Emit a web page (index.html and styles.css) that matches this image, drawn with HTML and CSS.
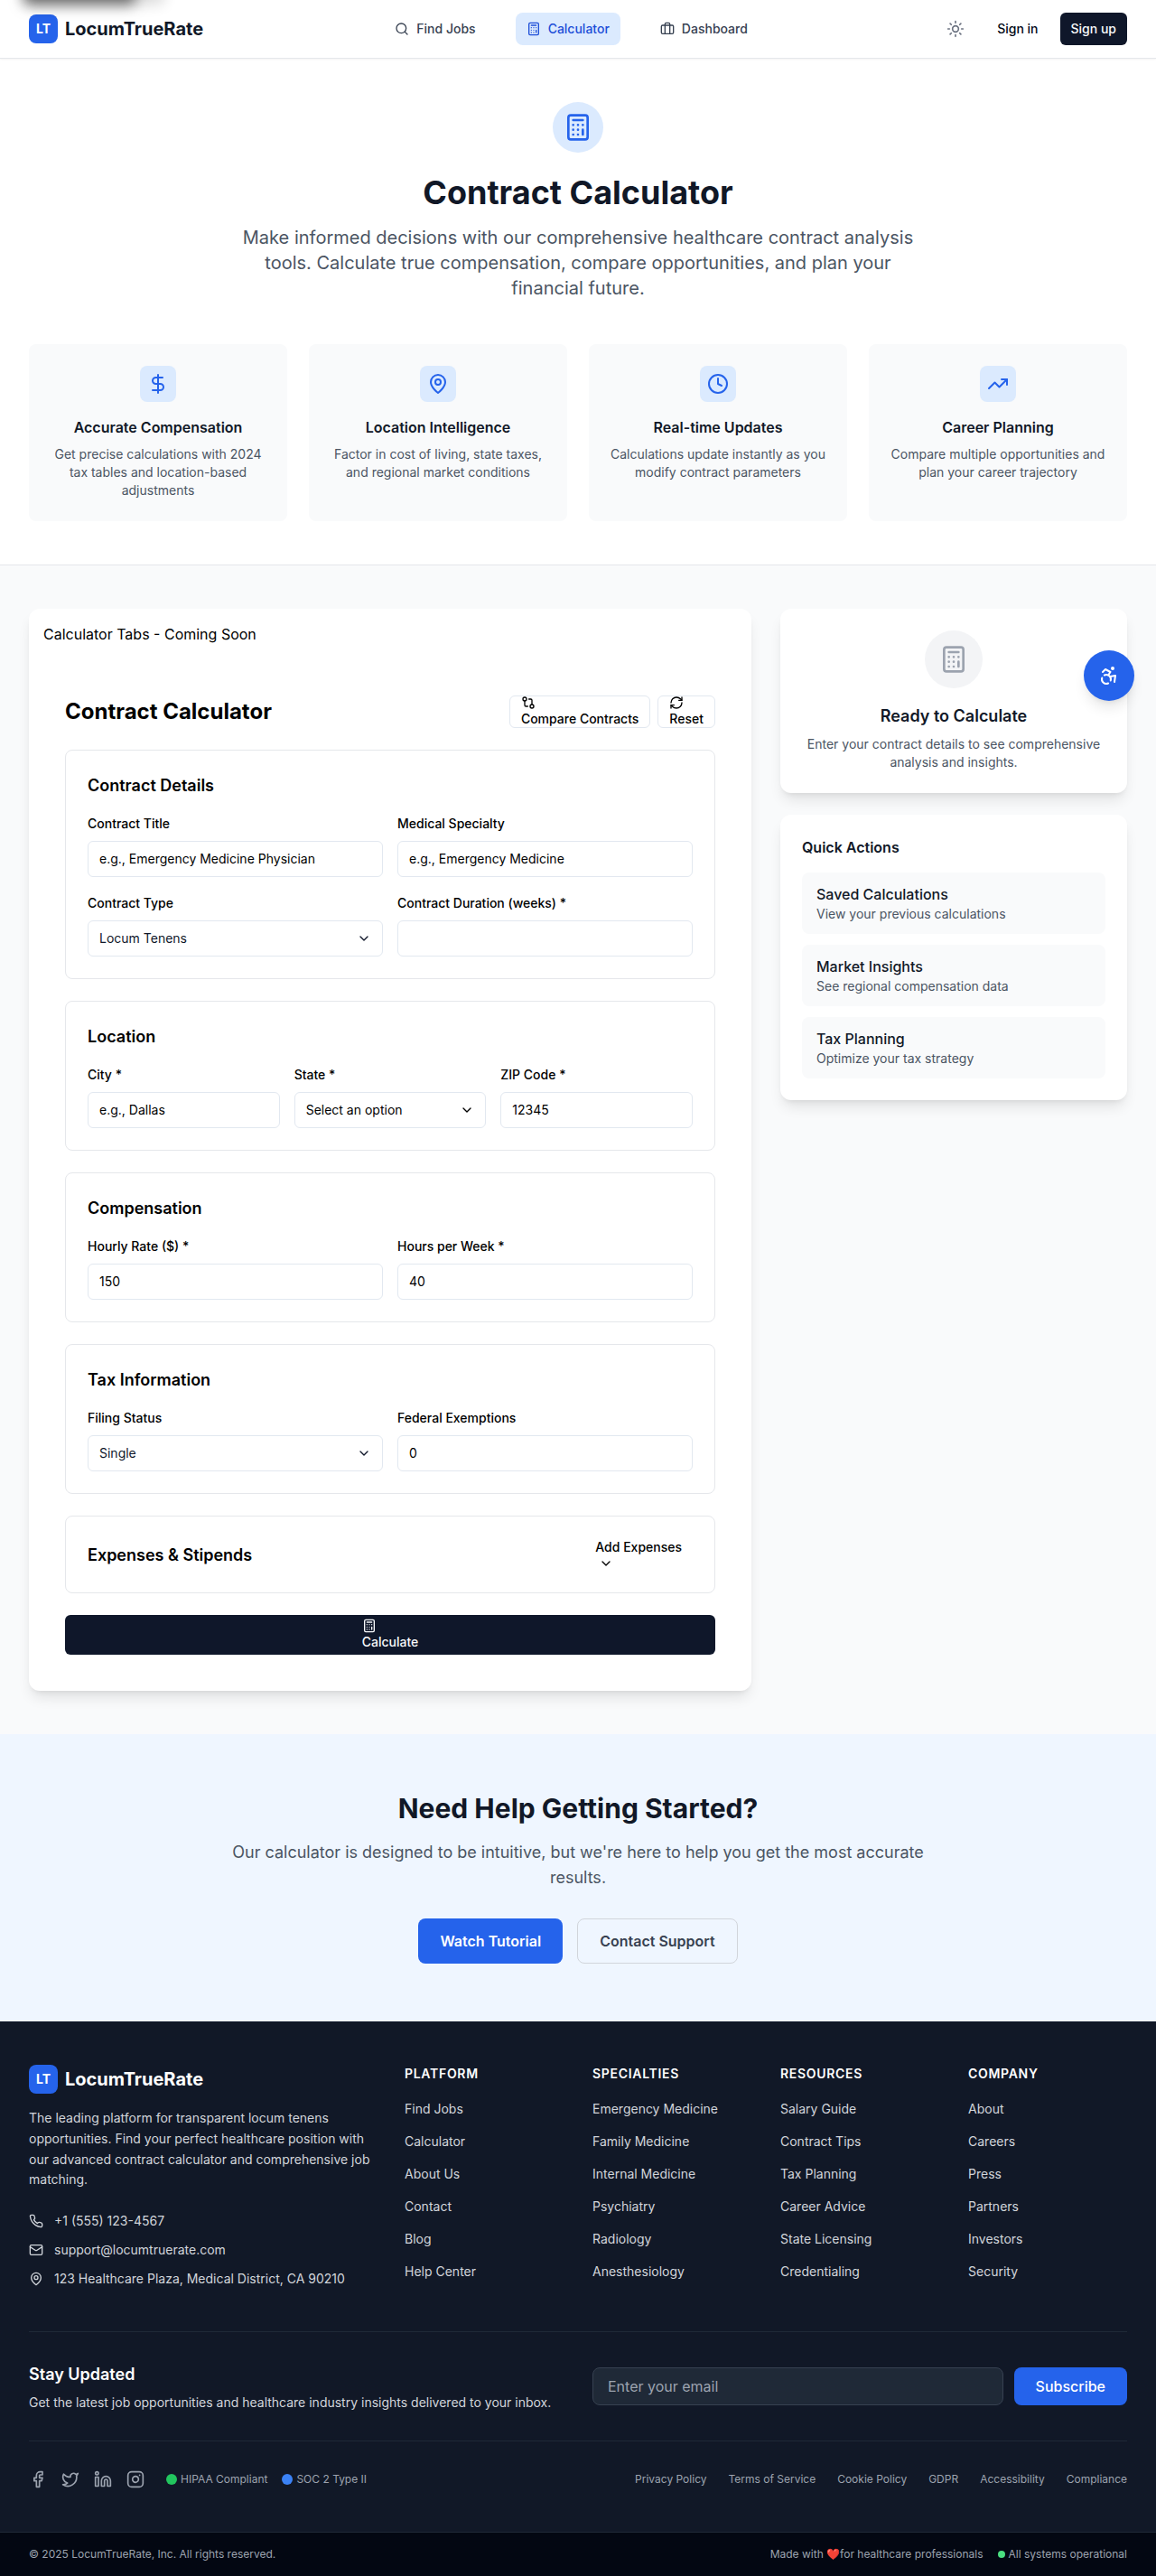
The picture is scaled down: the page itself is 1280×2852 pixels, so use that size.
FILE: index.html
```html
<!DOCTYPE html>
<html lang="en">
<head>
<meta charset="utf-8">
<title>Contract Calculator | LocumTrueRate</title>
<link rel="stylesheet" href="styles.css">
</head>
<body>
<svg class="sprite" aria-hidden="true">
  <symbol id="search" viewBox="0 0 24 24"><circle cx="11" cy="11" r="8"/><path d="m21 21-4.3-4.3"/></symbol>
  <symbol id="calc" viewBox="0 0 24 24"><rect width="16" height="20" x="4" y="2" rx="2"/><path d="M8 6h8M16 14v4M16 10h.01M12 10h.01M8 10h.01M12 14h.01M8 14h.01M12 18h.01M8 18h.01"/></symbol>
  <symbol id="briefcase" viewBox="0 0 24 24"><path d="M16 20V4a2 2 0 0 0-2-2h-4a2 2 0 0 0-2 2v16"/><rect width="20" height="14" x="2" y="6" rx="2"/></symbol>
  <symbol id="sun" viewBox="0 0 24 24"><circle cx="12" cy="12" r="4"/><path d="M12 2v2M12 20v2M4.93 4.93l1.41 1.41M17.66 17.66l1.41 1.41M2 12h2M20 12h2M6.34 17.66l-1.41 1.41M19.07 4.93l-1.41 1.41"/></symbol>
  <symbol id="dollar" viewBox="0 0 24 24"><path d="M12 2v20M17 5H9.5a3.5 3.5 0 0 0 0 7h5a3.5 3.5 0 0 1 0 7H6"/></symbol>
  <symbol id="pin" viewBox="0 0 24 24"><path d="M20 10c0 6-8 12-8 12s-8-6-8-12a8 8 0 0 1 16 0Z"/><circle cx="12" cy="10" r="3"/></symbol>
  <symbol id="clock" viewBox="0 0 24 24"><circle cx="12" cy="12" r="10"/><path d="M12 6v6l4 2"/></symbol>
  <symbol id="trend" viewBox="0 0 24 24"><path d="m22 7-8.5 8.5-5-5L2 17"/><path d="M16 7h6v6"/></symbol>
  <symbol id="compare" viewBox="0 0 24 24"><circle cx="18" cy="18" r="3"/><circle cx="6" cy="6" r="3"/><path d="M13 6h3a2 2 0 0 1 2 2v7M11 18H8a2 2 0 0 1-2-2V9"/></symbol>
  <symbol id="refresh" viewBox="0 0 24 24"><path d="M3 12a9 9 0 0 1 9-9 9.75 9.75 0 0 1 6.74 2.74L21 8"/><path d="M21 3v5h-5M21 12a9 9 0 0 1-9 9 9.75 9.75 0 0 1-6.74-2.74L3 16"/><path d="M8 16H3v5"/></symbol>
  <symbol id="chevron" viewBox="0 0 24 24"><path d="m6 9 6 6 6-6"/></symbol>
  <symbol id="access" viewBox="0 0 24 24"><circle cx="16" cy="4" r="1"/><path d="m18 19 1-7-6 1"/><path d="m5 8 3-3 5.5 3-2.36 3.5"/><path d="M4.24 14.5a5 5 0 0 0 6.88 6"/><path d="M13.76 17.5a5 5 0 0 0-6.88-6"/></symbol>
  <symbol id="phone" viewBox="0 0 24 24"><path d="M22 16.92v3a2 2 0 0 1-2.18 2 19.79 19.79 0 0 1-8.63-3.07 19.5 19.5 0 0 1-6-6 19.79 19.79 0 0 1-3.07-8.67A2 2 0 0 1 4.11 2h3a2 2 0 0 1 2 1.72 12.84 12.84 0 0 0 .7 2.81 2 2 0 0 1-.45 2.11L8.09 9.91a16 16 0 0 0 6 6l1.27-1.27a2 2 0 0 1 2.11-.45 12.84 12.84 0 0 0 2.81.7A2 2 0 0 1 22 16.92z"/></symbol>
  <symbol id="mail" viewBox="0 0 24 24"><rect width="20" height="16" x="2" y="4" rx="2"/><path d="m22 7-8.97 5.7a1.94 1.94 0 0 1-2.06 0L2 7"/></symbol>
  <symbol id="facebook" viewBox="0 0 24 24"><path d="M18 2h-3a5 5 0 0 0-5 5v3H7v4h3v8h4v-8h3l1-4h-4V7a1 1 0 0 1 1-1h3z"/></symbol>
  <symbol id="twitter" viewBox="0 0 24 24"><path d="M22 4s-.7 2.1-2 3.4c1.6 10-9.4 17.3-18 11.6 2.2.1 4.4-.6 6-2C3 15.5.5 9.6 3 5c2.2 2.6 5.6 4.1 9 4-.9-4.2 4-6.6 7-3.8 1.1 0 3-1.2 3-1.2z"/></symbol>
  <symbol id="linkedin" viewBox="0 0 24 24"><path d="M16 8a6 6 0 0 1 6 6v7h-4v-7a2 2 0 0 0-4 0v7h-4v-7a6 6 0 0 1 6-6z"/><rect width="4" height="12" x="2" y="9"/><circle cx="4" cy="4" r="2"/></symbol>
  <symbol id="instagram" viewBox="0 0 24 24"><rect width="20" height="20" x="2" y="2" rx="5"/><path d="M16 11.37A4 4 0 1 1 12.63 8 4 4 0 0 1 16 11.37zM17.5 6.5h.01"/></symbol>
</svg>

<div class="skip-shadow skip-main"></div>
<div class="skip-shadow skip-nav"></div>

<header class="header">
  <a class="logo"><span class="logo-mark">LT</span><span>LocumTrueRate</span></a>
  <nav class="nav">
    <a class="nav-link"><svg class="i16"><use href="#search"/></svg>Find Jobs</a>
    <a class="nav-link active"><svg class="i16"><use href="#calc"/></svg>Calculator</a>
    <a class="nav-link"><svg class="i16"><use href="#briefcase"/></svg>Dashboard</a>
  </nav>
  <div class="header-actions">
    <span class="theme"><svg class="i20"><use href="#sun"/></svg></span>
    <div class="auth"><a class="btn-sm">Sign in</a><a class="btn-sm dark">Sign up</a></div>
  </div>
</header>

<section class="hero">
  <div class="hero-icon"><svg class="i32"><use href="#calc"/></svg></div>
  <h1>Contract Calculator</h1>
  <p class="lead">Make informed decisions with our comprehensive healthcare contract analysis tools. Calculate true compensation, compare opportunities, and plan your financial future.</p>
  <div class="features">
    <div class="feature"><span class="feature-icon"><svg class="i24"><use href="#dollar"/></svg></span><h3>Accurate Compensation</h3><p>Get precise calculations with 2024 tax tables and location-based adjustments</p></div>
    <div class="feature"><span class="feature-icon"><svg class="i24"><use href="#pin"/></svg></span><h3>Location Intelligence</h3><p>Factor in cost of living, state taxes, and regional market conditions</p></div>
    <div class="feature"><span class="feature-icon"><svg class="i24"><use href="#clock"/></svg></span><h3>Real-time Updates</h3><p>Calculations update instantly as you modify contract parameters</p></div>
    <div class="feature"><span class="feature-icon"><svg class="i24"><use href="#trend"/></svg></span><h3>Career Planning</h3><p>Compare multiple opportunities and plan your career trajectory</p></div>
  </div>
</section>

<main class="main">
  <div class="card calculator">
    <div class="tabs">Calculator Tabs - Coming Soon</div>
    <div class="form">
      <div class="form-head">
        <h2>Contract Calculator</h2>
        <div class="form-tools">
          <button class="stack-btn outline"><svg class="i16"><use href="#compare"/></svg>Compare Contracts</button>
          <button class="stack-btn outline"><svg class="i16"><use href="#refresh"/></svg>Reset</button>
        </div>
      </div>
      <section class="panel">
        <h3>Contract Details</h3>
        <div class="grid two">
          <div><div class="label"><label>Contract Title</label></div><div class="field">e.g., Emergency Medicine Physician</div></div>
          <div><div class="label"><label>Medical Specialty</label></div><div class="field">e.g., Emergency Medicine</div></div>
          <div><div class="label"><label>Contract Type</label></div><div class="field chosen">Locum Tenens<svg class="i16"><use href="#chevron"/></svg></div></div>
          <div><div class="label"><label>Contract Duration (weeks) *</label></div><div class="field"></div></div>
        </div>
      </section>
      <section class="panel">
        <h3>Location</h3>
        <div class="grid three">
          <div><div class="label"><label>City *</label></div><div class="field">e.g., Dallas</div></div>
          <div><div class="label"><label>State *</label></div><div class="field">Select an option<svg class="i16"><use href="#chevron"/></svg></div></div>
          <div><div class="label"><label>ZIP Code *</label></div><div class="field">12345</div></div>
        </div>
      </section>
      <section class="panel">
        <h3>Compensation</h3>
        <div class="grid two">
          <div><div class="label"><label>Hourly Rate ($) *</label></div><div class="field">150</div></div>
          <div><div class="label"><label>Hours per Week *</label></div><div class="field">40</div></div>
        </div>
      </section>
      <section class="panel">
        <h3>Tax Information</h3>
        <div class="grid two">
          <div><div class="label"><label>Filing Status</label></div><div class="field chosen">Single<svg class="i16"><use href="#chevron"/></svg></div></div>
          <div><div class="label"><label>Federal Exemptions</label></div><div class="field">0</div></div>
        </div>
      </section>
      <section class="panel expenses">
        <h3>Expenses &amp; Stipends</h3>
        <button class="stack-btn">Add Expenses<svg class="i16 indent"><use href="#chevron"/></svg></button>
      </section>
      <button class="submit"><span><svg class="i16"><use href="#calc"/></svg>Calculate</span></button>
    </div>
  </div>

  <aside class="side">
    <div class="card ready">
      <div class="ready-icon"><svg class="i32"><use href="#calc"/></svg></div>
      <h3>Ready to Calculate</h3>
      <p>Enter your contract details to see comprehensive analysis and insights.</p>
    </div>
    <div class="card quick">
      <h3>Quick Actions</h3>
      <a class="action"><strong>Saved Calculations</strong><span>View your previous calculations</span></a>
      <a class="action"><strong>Market Insights</strong><span>See regional compensation data</span></a>
      <a class="action"><strong>Tax Planning</strong><span>Optimize your tax strategy</span></a>
    </div>
  </aside>
</main>

<section class="help">
  <h2>Need Help Getting Started?</h2>
  <p>Our calculator is designed to be intuitive, but we're here to help you get the most accurate results.</p>
  <div class="help-actions"><a class="cta primary">Watch Tutorial</a><a class="cta">Contact Support</a></div>
</section>

<footer class="footer">
  <div class="footer-inner">
    <div class="footer-grid">
      <div class="brand">
        <a class="logo"><span class="logo-mark">LT</span><span>LocumTrueRate</span></a>
        <p>The leading platform for transparent locum tenens opportunities. Find your perfect healthcare position with our advanced contract calculator and comprehensive job matching.</p>
        <div class="contacts">
          <div><svg class="i16"><use href="#phone"/></svg>+1 (555) 123-4567</div>
          <div><svg class="i16"><use href="#mail"/></svg>support@locumtruerate.com</div>
          <div><svg class="i16"><use href="#pin"/></svg>123 Healthcare Plaza, Medical District, CA 90210</div>
        </div>
      </div>
      <div class="links"><h4>Platform</h4><ul><li><a>Find Jobs</a></li><li><a>Calculator</a></li><li><a>About Us</a></li><li><a>Contact</a></li><li><a>Blog</a></li><li><a>Help Center</a></li></ul></div>
      <div class="links"><h4>Specialties</h4><ul><li><a>Emergency Medicine</a></li><li><a>Family Medicine</a></li><li><a>Internal Medicine</a></li><li><a>Psychiatry</a></li><li><a>Radiology</a></li><li><a>Anesthesiology</a></li></ul></div>
      <div class="links"><h4>Resources</h4><ul><li><a>Salary Guide</a></li><li><a>Contract Tips</a></li><li><a>Tax Planning</a></li><li><a>Career Advice</a></li><li><a>State Licensing</a></li><li><a>Credentialing</a></li></ul></div>
      <div class="links"><h4>Company</h4><ul><li><a>About</a></li><li><a>Careers</a></li><li><a>Press</a></li><li><a>Partners</a></li><li><a>Investors</a></li><li><a>Security</a></li></ul></div>
    </div>
    <div class="newsletter">
      <div><h3>Stay Updated</h3><p>Get the latest job opportunities and healthcare industry insights delivered to your inbox.</p></div>
      <div class="subscribe"><div class="email">Enter your email</div><a class="sub-btn">Subscribe</a></div>
    </div>
    <div class="meta">
      <div class="meta-left">
        <div class="social"><svg class="i20"><use href="#facebook"/></svg><svg class="i20"><use href="#twitter"/></svg><svg class="i20"><use href="#linkedin"/></svg><svg class="i20"><use href="#instagram"/></svg></div>
        <div class="badges"><span><i class="dot green"></i>HIPAA Compliant</span><span><i class="dot blue"></i>SOC 2 Type II</span></div>
      </div>
      <div class="legal"><a>Privacy Policy</a><a>Terms of Service</a><a>Cookie Policy</a><a>GDPR</a><a>Accessibility</a><a>Compliance</a></div>
    </div>
  </div>
  <div class="bottom">
    <span>© 2025 LocumTrueRate, Inc. All rights reserved.</span>
    <div class="bottom-right"><span class="made">Made with&nbsp;<span class="heart">❤️</span>for healthcare professionals</span><span class="status"><i class="dot small"></i>All systems operational</span></div>
  </div>
</footer>

<button class="a11y"><svg class="i24"><use href="#access"/></svg></button>
</body>
</html>
```
FILE: styles.css
```css
*, *::before, *::after { box-sizing: border-box; }
body {
  margin: 0;
  position: relative;
  font-family: Inter, "Liberation Sans", sans-serif;
  font-size: 16px;
  line-height: 24px;
  color: #020817;
  background: #fff;
  overflow-x: hidden;
}
h1, h2, h3, h4, p, ul { margin: 0; padding: 0; }
ul { list-style: none; }
button { font: inherit; border: 0; background: none; padding: 0; color: inherit; }
svg { display: block; flex: none; fill: none; stroke: currentColor; stroke-width: 2; stroke-linecap: round; stroke-linejoin: round; }
.sprite { position: absolute; width: 0; height: 0; }
.i16 { width: 16px; height: 16px; }
.i20 { width: 20px; height: 20px; }
.i24 { width: 24px; height: 24px; }
.i32 { width: 32px; height: 32px; }

/* Off-screen skip links: only their shadows reach the page */
.skip-shadow { position: absolute; z-index: 5; top: -40px; height: 40px; border-radius: 6px; }
.skip-main { left: 26px; width: 124px; box-shadow: 0 5px 15px rgba(0,0,0,.54); }
.skip-nav { left: 26px; width: 156px; box-shadow: 0 5px 15px rgba(0,0,0,.14); }

.header {
  position: relative;
  z-index: 2;
  display: flex;
  align-items: center;
  justify-content: space-between;
  height: 65px;
  padding: 0 32px;
  background: #fff;
  border-bottom: 1px solid #e5e7eb;
  box-shadow: 0 1px 2px rgba(0,0,0,.05);
}
.logo { display: flex; align-items: center; gap: 8px; font-size: 20px; line-height: 28px; font-weight: 700; color: #111827; }
.logo-mark { display: flex; align-items: center; justify-content: center; width: 32px; height: 32px; border-radius: 8px; background: #2563eb; color: #fff; font-size: 14px; line-height: 20px; }
.nav { display: flex; gap: 32px; }
.nav-link { display: flex; align-items: center; gap: 8px; padding: 8px 12px; border-radius: 8px; font-size: 14px; line-height: 20px; font-weight: 500; color: #374151; }
.nav-link.active { background: #dbeafe; color: #1d4ed8; }
.header-actions { display: flex; align-items: center; gap: 16px; }
.theme { padding: 8px; color: #6b7280; }
.auth { display: flex; gap: 12px; }
.btn-sm { padding: 8px 12px; border-radius: 6px; font-size: 14px; line-height: 20px; font-weight: 500; }
.btn-sm.dark { background: #0f172a; color: #f8fafc; }

.hero { padding: 48px 32px; border-bottom: 1px solid #e5e7eb; text-align: center; }
.hero-icon { width: 56px; height: 56px; padding: 12px; margin: 0 auto 24px; border-radius: 50%; background: #dbeafe; color: #2563eb; }
.hero h1 { font-size: 36px; line-height: 40px; font-weight: 700; color: #111827; }
.lead { max-width: 768px; margin: 16px auto 48px; font-size: 20px; line-height: 28px; color: #4b5563; }
.features { display: grid; grid-template-columns: repeat(4, 1fr); gap: 24px; }
.feature { padding: 24px; border-radius: 8px; background: #f9fafb; }
.feature-icon { display: block; width: 40px; height: 40px; padding: 8px; margin: 0 auto 16px; border-radius: 8px; background: #dbeafe; color: #2563eb; }
.feature h3 { font-size: 16px; line-height: 24px; font-weight: 600; color: #111827; margin-bottom: 8px; }
.feature p { font-size: 14px; line-height: 20px; color: #4b5563; }

.main { display: grid; grid-template-columns: repeat(3, 1fr); align-items: start; gap: 32px; padding: 48px 32px; background: #f9fafb; }
.card { border-radius: 12px; background: #fff; box-shadow: 0 10px 15px -3px rgba(0,0,0,.1), 0 4px 6px -4px rgba(0,0,0,.1); }
.calculator { grid-column: span 2; color: #000; }
.tabs { padding: 16px; }
.form { display: flex; flex-direction: column; gap: 24px; padding: 40px; }
.form-head { display: flex; align-items: center; justify-content: space-between; height: 36px; }
.form-head h2 { font-size: 24px; line-height: 32px; font-weight: 700; }
.form-tools { display: flex; gap: 8px; }
.stack-btn { display: flex; flex-direction: column; align-items: flex-start; justify-content: center; height: 36px; padding: 0 12px; border-radius: 6px; font-size: 14px; line-height: 20px; font-weight: 500; }
.stack-btn.outline { border: 1px solid #e2e8f0; }
.indent { margin-left: 4px; }
.panel { padding: 24px; border: 1px solid #e5e7eb; border-radius: 8px; }
.panel h3 { padding-top: 1px; margin-bottom: -1px; font-size: 18px; line-height: 28px; font-weight: 600; }
.grid { display: grid; gap: 16px; margin-top: 16px; }
.grid.two { grid-template-columns: repeat(2, 1fr); }
.grid.three { grid-template-columns: repeat(3, 1fr); }
.label { height: 24px; margin-bottom: 8px; }
.label label { font-size: 14px; line-height: 20px; font-weight: 500; }
.field { display: flex; align-items: center; justify-content: space-between; height: 40px; padding: 0 12px; border: 1px solid #e2e8f0; border-radius: 6px; font-size: 14px; line-height: 20px; }
.field.chosen { color: #0f172a; }
.expenses { display: flex; align-items: center; justify-content: space-between; }
.submit { display: flex; align-items: center; justify-content: center; height: 44px; border-radius: 6px; background: #0f172a; color: #f8fafc; font-size: 14px; line-height: 20px; font-weight: 500; text-align: left; }

.side { display: grid; gap: 24px; }
.side p, .action span { font-size: 14px; line-height: 20px; color: #4b5563; }
.ready { padding: 24px; text-align: center; }
.ready-icon { width: 64px; height: 64px; padding: 16px; margin: 0 auto 16px; border-radius: 50%; background: #f3f4f6; color: #9ca3af; }
.ready h3 { padding-top: 1px; margin-bottom: 7px; font-size: 18px; line-height: 28px; font-weight: 600; color: #111827; }
.quick { display: flex; flex-direction: column; gap: 12px; padding: 24px; }
.quick h3 { margin-bottom: 4px; font-size: 16px; line-height: 24px; font-weight: 600; color: #111827; }
.action { display: flex; flex-direction: column; padding: 12px 16px; border-radius: 8px; background: #f9fafb; }
.action strong { font-weight: 500; color: #111827; }

.help { padding: 64px 32px; background: #eff6ff; text-align: center; }
.help h2 { font-size: 30px; line-height: 36px; font-weight: 700; color: #111827; }
.help p { max-width: 768px; margin: 17px auto 31px; font-size: 18px; line-height: 28px; color: #4b5563; }
.help-actions { display: flex; justify-content: center; gap: 16px; }
.cta { padding: 12px 24px; border: 1px solid #d1d5db; border-radius: 8px; font-weight: 600; color: #374151; }
.cta.primary { padding: 13px 24px; border: 0; background: #2563eb; color: #fff; }

.footer { background: #111827; color: #d1d5db; font-size: 14px; line-height: 20px; }
.footer-inner { padding: 48px 32px; }
.footer-grid { display: grid; grid-template-columns: repeat(6, 1fr); gap: 32px; padding-bottom: 48px; }
.brand { grid-column: span 2; }
.footer .logo { color: #fff; }
.brand p { margin: 16px 0 24px; line-height: 22.75px; }
.contacts { display: grid; gap: 12px; }
.contacts div { display: flex; align-items: center; gap: 12px; }
.links h4 { margin-bottom: 16px; font-size: 14px; line-height: 20px; font-weight: 600; letter-spacing: .05em; text-transform: uppercase; color: #fff; }
.links ul { display: grid; gap: 12px; }
.links li { height: 24px; font-size: 16px; line-height: 24px; }
.links a { font-size: 14px; line-height: 20px; }
.newsletter { display: grid; grid-template-columns: 1fr 1fr; align-items: center; gap: 32px; padding: 32px 0; border-top: 1px solid #1f2937; }
.newsletter h3 { padding-top: 1px; margin-bottom: 7px; font-size: 18px; line-height: 28px; font-weight: 600; color: #fff; }
.subscribe { display: flex; gap: 12px; font-size: 16px; line-height: 24px; }
.email { flex: 1; padding: 8px 16px; border: 1px solid #374151; border-radius: 8px; background: #1f2937; color: #9ca3af; }
.sub-btn { padding: 9px 24px; border-radius: 8px; background: #2563eb; color: #fff; font-weight: 500; }
.meta { display: flex; align-items: center; justify-content: space-between; padding-top: 32px; border-top: 1px solid #1f2937; color: #9ca3af; font-size: 12px; line-height: 16px; }
.meta-left { display: flex; align-items: center; gap: 24px; }
.social { display: flex; gap: 16px; }
.badges { display: flex; gap: 16px; }
.badges span, .status { display: flex; align-items: center; gap: 4px; }
.dot { width: 12px; height: 12px; border-radius: 50%; }
.dot.green { background: #22c55e; }
.dot.blue { background: #3b82f6; }
.dot.small { width: 8px; height: 8px; background: #4ade80; }
.legal { display: flex; gap: 24px; }
.bottom { display: flex; align-items: center; justify-content: space-between; height: 49px; padding: 0 32px; border-top: 1px solid #1f2937; background: #030712; color: #9ca3af; font-size: 12px; line-height: 16px; }
.bottom-right { display: flex; gap: 16px; }
.made { display: flex; align-items: center; }
.heart { color: #ef4444; }

.a11y { position: absolute; z-index: 4; top: 720px; right: 24px; display: flex; align-items: center; justify-content: center; width: 56px; height: 56px; border-radius: 50%; background: #2563eb; color: #fff; box-shadow: 0 10px 15px -3px rgba(0,0,0,.1), 0 4px 6px -4px rgba(0,0,0,.1); }
```
